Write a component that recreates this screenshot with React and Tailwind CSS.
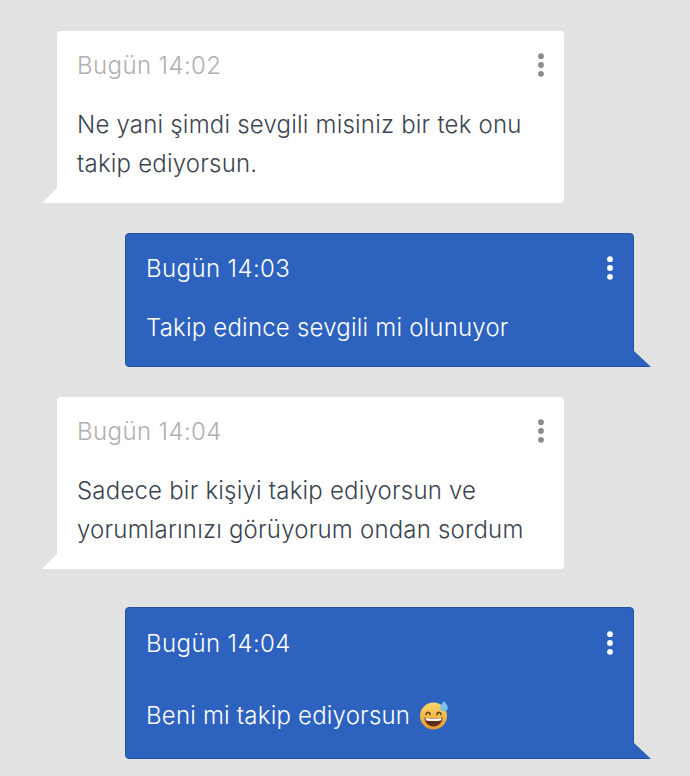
function Dots({ color }) {
  return (
    <svg width="8" height="26" viewBox="0 0 8 26" className="shrink-0 -mt-[3px]">
      <circle cx="4" cy="4.200" r="2.900" fill={color} />
      <circle cx="4" cy="13" r="2.900" fill={color} />
      <circle cx="4" cy="21.800" r="2.900" fill={color} />
    </svg>
  );
}

function Emoji() {
  return (
    <svg width="30" height="30" viewBox="0 0 30 30" className="inline-block align-[-6px] ml-[9px]">
      <defs>
        <linearGradient id="f" x1="0" y1="0" x2="0" y2="1">
          <stop offset="0" stopColor="#fbd96a" />
          <stop offset="1" stopColor="#e9982c" />
        </linearGradient>
      </defs>
      <circle cx="14.500" cy="16" r="13.500" fill="url(#f)" />
      <path d="M7 14.500c.6-3 3.600-3 4.200 0M17.800 14.500c.6-3 3.600-3 4.200 0" fill="none" stroke="#5a3a1a" strokeWidth="1.500" strokeLinecap="round" />
      <path d="M5.500 17.500c5.500 1.300 12.500 1.300 18 0-.3 5.500-4 9-9 9s-8.700-3.500-9-9z" fill="#5b3014" />
      <path d="M6.500 18c5 1 11 1 16 0-.1 1-.3 1.800-.6 2.500-4.800.8-10 .8-14.800 0-.3-.7-.5-1.500-.6-2.500z" fill="#fff" />
      <path d="M25 1c1.500 2.500 3.800 4.200 3.800 6.500a3.800 3.800 0 0 1-7.600 0c0-2.300 2.300-4 3.800-6.500z" fill="#7cc4ee" />
    </svg>
  );
}

function Bubble({ side, time, lines, emoji, className, textGap }) {
  const mine = side === "right";
  return (
    <div
      className={
        "relative " +
        (mine
          ? "ml-[125px] w-[509px] bg-[#2d62bf] border border-[#25539f] pl-[20px] pr-[19px] rounded-t-[4px] rounded-bl-[4px] "
          : "ml-[57px] w-[507px] bg-white pl-[20px] pr-[19px] rounded-t-[4px] rounded-br-[4px] ") +
        (className || "")
      }
    >
      <div className="flex items-center justify-between h-[40px]">
        <span className={"text-[24px] leading-[40px] font-light tracking-[0.4px] " + (mine ? "text-white" : "text-[#b0b0b0]")}>{time}</span>
        <Dots color={mine ? "#ffffff" : "#8a8a8a"} />
      </div>
      <div className={textGap + " text-[24px] leading-[39px] font-light tracking-[0.2px] " + (mine ? "text-white" : "text-[#3b4450]")}>
        {lines.map((l, i) => (
          <div key={i}>
            {l}
            {emoji && <Emoji />}
          </div>
        ))}
      </div>
      {mine ? (
        <svg width="18" height="18" viewBox="0 0 18 18" className="absolute right-[-18px] bottom-[-1px]">
          <path d="M-1 0 L17 17 L-1 17 Z" fill="#2d62bf" />
          <path d="M0 17.500 H17.500" stroke="#25539f" />
        </svg>
      ) : (
        <svg width="16" height="16" viewBox="0 0 16 16" className="absolute left-[-15px] bottom-0">
          <path d="M16 0 L0 16 L16 16 Z" fill="#ffffff" />
        </svg>
      )}
    </div>
  );
}

export default function App() {
  return (
    <div className="w-[690px] h-[776px] overflow-hidden bg-[#e2e2e2] pt-[31px] font-['Inter',sans-serif]">
      <Bubble side="left" time="Bugün 14:02" lines={["Ne yani şimdi sevgili misiniz bir tek onu", "takip ediyorsun."]} textGap="mt-[19px]" className="h-[172px] pt-[15px]" />
      <Bubble side="right" time="Bugün 14:03" lines={["Takip edince sevgili mi olunuyor"]} textGap="mt-[19px]" className="h-[134px] mt-[30px] pt-[15px]" />
      <Bubble side="left" time="Bugün 14:04" lines={["Sadece bir kişiyi takip ediyorsun ve", "yorumlarınızı görüyorum ondan sordum"]} textGap="mt-[19px]" className="h-[172px] mt-[30px] pt-[15px]" />
      <Bubble side="right" time="Bugün 14:04" lines={["Beni mi takip ediyorsun"]} emoji textGap="mt-[32px]" className="h-[152px] mt-[38px] pt-[16px]" />
    </div>
  );
}
